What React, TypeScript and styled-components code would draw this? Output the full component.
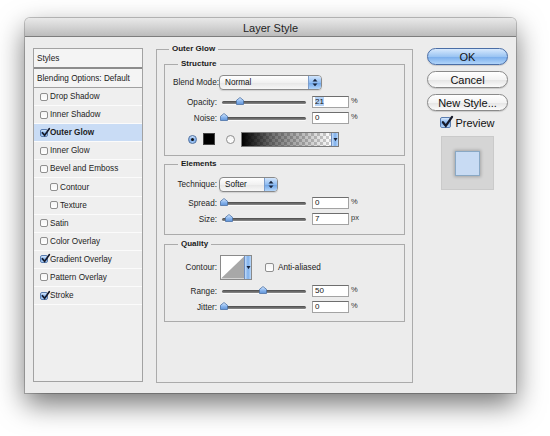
import styled, { createGlobalStyle } from "styled-components";

const GlobalStyle = createGlobalStyle`
  html, body {
    margin: 0;
    background: #fff;
  }
  body {
    font-family: "Liberation Sans", Arial, sans-serif;
    color: #1a1a1a;
  }
  * {
    box-sizing: border-box;
  }
`;

type StyleItem = { name: string; checked?: boolean; selected?: boolean; nested?: boolean };

const styleItems: StyleItem[] = [
  { name: "Drop Shadow" },
  { name: "Inner Shadow" },
  { name: "Outer Glow", checked: true, selected: true },
  { name: "Inner Glow" },
  { name: "Bevel and Emboss" },
  { name: "Contour", nested: true },
  { name: "Texture", nested: true },
  { name: "Satin" },
  { name: "Color Overlay" },
  { name: "Gradient Overlay", checked: true },
  { name: "Pattern Overlay" },
  { name: "Stroke", checked: true },
];

const CheckBox = ({ checked, size = 8 }: { checked?: boolean; size?: number }) => (
  <Box $checked={checked} $size={size}>
    {checked && (
      <CheckSvg viewBox="0 0 10 10" $size={size}>
        <path d="M1.6 5.2 L4 8.2 L9.2 0.8" stroke="#161a2a" strokeWidth="1.9" fill="none" strokeLinecap="round" />
      </CheckSvg>
    )}
  </Box>
);

const Slider = ({ at }: { at: number }) => (
  <SliderWrap>
    <Track />
    <Thumb viewBox="0 0 8 8" style={{ left: at }}>
      <defs>
        <linearGradient id="thumbFill" x1="0" y1="0" x2="0" y2="1">
          <stop offset="0" stopColor="#e2efff" />
          <stop offset="0.5" stopColor="#8fbaf0" />
          <stop offset="1" stopColor="#5f93d8" />
        </linearGradient>
      </defs>
      <path d="M4 0.5 L7.5 3.3 V7.5 H0.5 V3.3 Z" fill="url(#thumbFill)" stroke="#4d72a6" strokeWidth="0.8" />
    </Thumb>
  </SliderWrap>
);

const PopupArrows = () => (
  <ArrowPart>
    <svg width="6" height="9" viewBox="0 0 6 9">
      <path d="M0.5 3.6 L3 0.8 L5.5 3.6 Z" fill="#17233a" />
      <path d="M0.5 5.4 L3 8.2 L5.5 5.4 Z" fill="#17233a" />
    </svg>
  </ArrowPart>
);

const DownStrip = () => (
  <Strip>
    <svg width="5" height="5" viewBox="0 0 5 5">
      <path d="M0.5 1 L4.5 1 L2.5 4.2 Z" fill="#17233a" />
    </svg>
  </Strip>
);

const SliderRow = ({ label, at, value, unit, selected }: { label: string; at: number; value: string; unit: string; selected?: boolean }) => (
  <Row $h={16}>
    <Label>{label}</Label>
    <Slider at={at} />
    <Field>{selected ? <SelectedText>{value}</SelectedText> : value}</Field>
    <Unit>{unit}</Unit>
  </Row>
);

export default function App() {
  return (
    <Page>
      <GlobalStyle />
      <Window>
        <TitleBar>Layer Style</TitleBar>
        <Body>
          <StylesList>
            <ListHeader>Styles</ListHeader>
            <ListBlend>Blending Options: Default</ListBlend>
            {styleItems.map((item) => (
              <ListItem key={item.name} $selected={item.selected} $nested={item.nested}>
                <CheckBox checked={item.checked} />
                <ItemText $bold={item.selected}>{item.name}</ItemText>
              </ListItem>
            ))}
          </StylesList>

          <MainGroup>
            <GroupTitle>Outer Glow</GroupTitle>

            <SubGroup $pt={4} $pb={7}>
              <GroupTitle>Structure</GroupTitle>
              <Row $h={19}>
                <Label>Blend Mode:</Label>
                <Popup $w={103}>
                  <PopupText>Normal</PopupText>
                  <PopupArrows />
                </Popup>
              </Row>
              <Spacer $h={2} />
              <SliderRow label="Opacity:" at={18} value="21" unit="%" selected />
              <SliderRow label="Noise:" at={1.5} value="0" unit="%" />
              <ColorRow>
                <Radio $on />
                <Swatch />
                <Radio />
                <GradientBar>
                  <GradientFill />
                  <DownStrip />
                </GradientBar>
              </ColorRow>
            </SubGroup>

            <SubGroup $pt={6} $pb={7} $mt={3}>
              <GroupTitle>Elements</GroupTitle>
              <Row $h={18}>
                <Label>Technique:</Label>
                <Popup $w={59}>
                  <PopupText>Softer</PopupText>
                  <PopupArrows />
                </Popup>
              </Row>
              <Spacer $h={2} />
              <SliderRow label="Spread:" at={1.5} value="0" unit="%" />
              <SliderRow label="Size:" at={7} value="7" unit="px" />
            </SubGroup>

            <SubGroup $pt={5} $pb={6} $mt={4}>
              <GroupTitle>Quality</GroupTitle>
              <Row $h={27}>
                <Label>Contour:</Label>
                <ContourBox>
                  <svg width="24" height="23" viewBox="0 0 24 23">
                    <rect width="24" height="23" fill="#fff" />
                    <polygon points="0,23 24,0 24,23" fill="#a8a8a8" />
                  </svg>
                  <DownStrip />
                </ContourBox>
                <AntiAlias>
                  <CheckBox size={9} />
                  <span>Anti-aliased</span>
                </AntiAlias>
              </Row>
              <Spacer $h={2} />
              <SliderRow label="Range:" at={41} value="50" unit="%" />
              <SliderRow label="Jitter:" at={1.5} value="0" unit="%" />
            </SubGroup>
          </MainGroup>

          <Side>
            <Button $primary>OK</Button>
            <Button>Cancel</Button>
            <Button>New Style...</Button>
            <PreviewToggle>
              <CheckBox checked size={11} />
              <span>Preview</span>
            </PreviewToggle>
            <PreviewBox>
              <PreviewSwatch />
            </PreviewBox>
          </Side>
        </Body>
      </Window>
    </Page>
  );
}

const Page = styled.div`
  padding: 18px 0 0 25px;
  height: 436px;
`;

const Window = styled.div`
  width: 491px;
  height: 375px;
  border-radius: 5px 5px 0 0;
  background: #ececec;
  box-shadow: 0 0 0 1px rgba(0, 0, 0, 0.22), 0 11px 28px rgba(0, 0, 0, 0.55);
  display: flex;
  flex-direction: column;
`;

const TitleBar = styled.div`
  height: 19px;
  border-radius: 5px 5px 0 0;
  border-bottom: 1px solid #7d7d7d;
  background: linear-gradient(#e9e9e9, #d3d3d3 50%, #bcbcbc);
  display: flex;
  align-items: center;
  justify-content: center;
  font-size: 11px;
  color: #1e1e1e;
  padding-top: 1px;
`;

const Body = styled.div`
  flex: 1;
  display: flex;
  align-items: flex-start;
  gap: 13px;
  padding: 7px 8px 0;
`;

const StylesList = styled.div`
  width: 110px;
  height: 334px;
  margin-top: 4px;
  border: 1px solid #a2a2a2;
  background: #efefef;
  font-size: 8.2px;
`;

const ListHeader = styled.div`
  height: 19px;
  padding-left: 3px;
  display: flex;
  align-items: center;
  border-bottom: 1px solid #8c8c8c;
  background: #f4f4f4;
`;

const ListBlend = styled.div`
  height: 20px;
  padding-left: 3px;
  display: flex;
  align-items: center;
  border-top: 1px solid #8c8c8c;
  border-bottom: 1px solid #a0a0a0;
  background: #f4f4f4;
`;

const ListItem = styled.div<{ $selected?: boolean; $nested?: boolean }>`
  height: 18.1px;
  display: flex;
  align-items: center;
  gap: 2px;
  padding-left: ${(p) => (p.$nested ? 16 : 6)}px;
  border-bottom: 1px solid #fbfbfb;
  background: ${(p) => (p.$selected ? "#c9dcf5" : "transparent")};
`;

const ItemText = styled.span<{ $bold?: boolean }>`
  font-weight: ${(p) => (p.$bold ? "bold" : "normal")};
  color: #1d1d1d;
`;

const Box = styled.span<{ $checked?: boolean; $size: number }>`
  position: relative;
  flex: none;
  width: ${(p) => p.$size}px;
  height: ${(p) => p.$size}px;
  border-radius: 2px;
  border: 1px solid ${(p) => (p.$checked ? "#5a7db0" : "#8f8f8f")};
  background: ${(p) =>
    p.$checked
      ? "linear-gradient(#d6e8fd, #88b6ee 50%, #6ea3e6 51%, #b8d7fa)"
      : "linear-gradient(#f4f4f4, #ffffff)"};
`;

const CheckSvg = styled.svg<{ $size: number }>`
  position: absolute;
  left: 0;
  top: -2px;
  width: ${(p) => p.$size + 1}px;
  height: ${(p) => p.$size + 1}px;
  overflow: visible;
`;

const MainGroup = styled.fieldset`
  width: 257px;
  height: 339px;
  margin: 0;
  padding: 5px 7px 0;
  min-width: 0;
  border: 1px solid #ababab;
`;

const SubGroup = styled.fieldset<{ $pt: number; $pb: number; $mt?: number }>`
  margin: ${(p) => p.$mt ?? 0}px 0 0;
  padding: ${(p) => p.$pt}px 8px ${(p) => p.$pb}px;
  min-width: 0;
  border: 1px solid #ababab;
  display: flex;
  flex-direction: column;
`;

const GroupTitle = styled.legend`
  margin-left: 5px;
  padding: 0 3px;
  font-size: 8px;
  line-height: 10px;
  font-weight: bold;
  color: #1a1a1a;
`;

const Row = styled.div<{ $h: number }>`
  height: ${(p) => p.$h}px;
  display: flex;
  align-items: center;
`;

const Spacer = styled.div<{ $h: number }>`
  height: ${(p) => p.$h}px;
`;

const Label = styled.span`
  width: 44px;
  margin-right: 2px;
  text-align: right;
  font-size: 8.2px;
  color: #1f1f1f;
  white-space: nowrap;
`;

const Popup = styled.div<{ $w: number }>`
  width: ${(p) => p.$w}px;
  height: 15px;
  display: flex;
  border: 1px solid #8a8a8a;
  border-radius: 4px;
  background: linear-gradient(#ffffff, #f1f1f1 50%, #e6e6e6 51%, #f7f7f7);
  box-shadow: 0 1px 1px rgba(0, 0, 0, 0.12);
  overflow: hidden;
`;

const PopupText = styled.span`
  flex: 1;
  padding-left: 5px;
  font-size: 8.2px;
  line-height: 13px;
  color: #141414;
`;

const ArrowPart = styled.span`
  width: 13px;
  display: flex;
  align-items: center;
  justify-content: center;
  border-left: 1px solid #7c9dcb;
  background: linear-gradient(#d3e6fc, #8ebcf2 50%, #6ba2e6 51%, #b4d6fa);
`;

const SliderWrap = styled.div`
  position: relative;
  width: 84px;
  height: 16px;
  margin-left: 3px;
  display: flex;
  align-items: center;
`;

const Track = styled.div`
  width: 100%;
  height: 3px;
  border-radius: 2px;
  background: linear-gradient(#4a4a4a, #8c8c8c);
  box-shadow: 0 1px 0 #fafafa;
`;

const Thumb = styled.svg`
  position: absolute;
  top: 3px;
  width: 8px;
  height: 8px;
  margin-left: -4px;
`;

const Field = styled.div`
  width: 37px;
  height: 12px;
  margin-left: 6px;
  padding-left: 2px;
  background: #fff;
  border: 1px solid #a3a3a3;
  border-top-color: #6e6e6e;
  font-size: 8px;
  line-height: 10px;
  color: #141414;
`;

const SelectedText = styled.span`
  background: #b4d2f6;
`;

const Unit = styled.span`
  margin-left: 2px;
  font-size: 7.5px;
  color: #333;
  align-self: flex-start;
  margin-top: 2px;
`;

const ColorRow = styled.div`
  height: 18px;
  margin-top: 4px;
  padding-left: 15px;
  display: flex;
  align-items: center;
`;

const Radio = styled.span<{ $on?: boolean }>`
  position: relative;
  width: 9px;
  height: 9px;
  border-radius: 50%;
  border: 1px solid ${(p) => (p.$on ? "#4d6f9f" : "#8e8e8e")};
  background: ${(p) =>
    p.$on ? "linear-gradient(#d2e5fc, #79aaea 55%, #a7cbf5)" : "linear-gradient(#f2f2f2, #ffffff)"};
  &::after {
    content: "";
    display: ${(p) => (p.$on ? "block" : "none")};
    position: absolute;
    left: 2px;
    top: 2px;
    width: 3px;
    height: 3px;
    border-radius: 50%;
    background: #111;
  }
`;

const Swatch = styled.span`
  width: 12px;
  height: 12px;
  margin: 0 11px 0 6px;
  background: #000;
  border: 1px solid #444;
`;

const GradientBar = styled.div`
  width: 98px;
  height: 15px;
  margin-left: 6px;
  display: flex;
  border: 1px solid #7a7a7a;
`;

const GradientFill = styled.div`
  flex: 1;
  background: linear-gradient(to right, #000, rgba(0, 0, 0, 0.55) 35%, rgba(0, 0, 0, 0)),
    conic-gradient(#cfcfcf 25%, #fff 0 50%, #cfcfcf 0 75%, #fff 0) 0 0 / 6px 6px;
`;

const Strip = styled.span`
  width: 7px;
  display: flex;
  align-items: center;
  justify-content: center;
  border-left: 1px solid #6f8fc0;
  background: linear-gradient(to right, #c4dcf8, #7fb0ec, #b9d8fa);
`;

const ContourBox = styled.div`
  width: 32px;
  height: 25px;
  margin-left: 1px;
  display: flex;
  border: 1px solid #8a8a8a;
  background: #fff;
`;

const AntiAlias = styled.label`
  margin-left: 13px;
  display: flex;
  align-items: center;
  gap: 4px;
  font-size: 8.2px;
  color: #1a1a1a;
  margin-top: -1px;
`;

const Side = styled.div`
  width: 82px;
  margin-top: 4px;
  padding-left: 1px;
  display: flex;
  flex-direction: column;
  align-items: center;
  gap: 6px;
`;

const Button = styled.div<{ $primary?: boolean }>`
  width: 81px;
  height: 17px;
  border-radius: 9px;
  display: flex;
  align-items: center;
  justify-content: center;
  font-size: 11px;
  color: #111;
  border: 1px solid ${(p) => (p.$primary ? "#4b6ea6" : "#8a8a8a")};
  background: ${(p) =>
    p.$primary
      ? "linear-gradient(#d7e9fd, #9cc5f3 50%, #78aceb 51%, #b1d5fa)"
      : "linear-gradient(#ffffff, #f3f3f3 50%, #e4e4e4 51%, #fbfbfb)"};
  box-shadow: 0 1px 1px rgba(0, 0, 0, 0.15);
`;

const PreviewToggle = styled.label`
  height: 13px;
  margin-top: -1px;
  display: flex;
  align-items: center;
  gap: 4px;
  font-size: 11px;
  color: #111;
`;

const PreviewBox = styled.div`
  width: 53px;
  height: 54px;
  margin-top: 1px;
  background: #d5d5d5;
  border: 1px solid #cacaca;
  display: flex;
  align-items: center;
  justify-content: center;
`;

const PreviewSwatch = styled.div`
  width: 25px;
  height: 25px;
  background: #c8dbf3;
  border: 1px solid #89a8c4;
  box-shadow: 0 0 3px 1px rgba(0, 0, 0, 0.22);
`;
